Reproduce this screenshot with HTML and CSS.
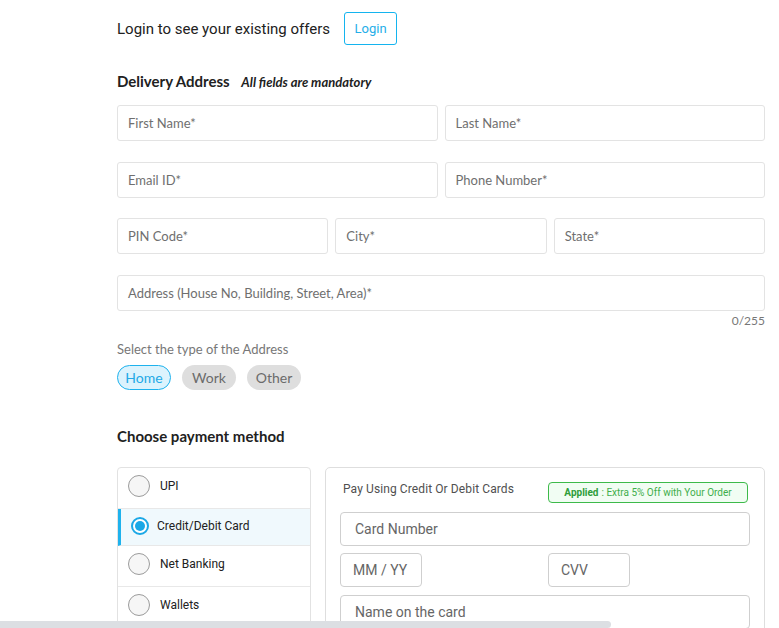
FILE: index.html
```html
<!DOCTYPE html>
<html>
<head>
<meta charset="utf-8">
<link rel="stylesheet" href="styles.css">
</head>
<body>
<div class="page">
  <div class="login-row">
    <span class="login-text">Login to see your existing offers</span>
    <button class="login-btn">Login</button>
  </div>

  <h2 class="section-title">Delivery Address <em class="mandatory">All fields are mandatory</em></h2>

  <div class="form">
    <div class="row two">
      <div class="field">First Name*</div>
      <div class="field">Last Name*</div>
    </div>
    <div class="row two">
      <div class="field">Email ID*</div>
      <div class="field">Phone Number*</div>
    </div>
    <div class="row three">
      <div class="field">PIN Code*</div>
      <div class="field">City*</div>
      <div class="field">State*</div>
    </div>
    <div class="row one">
      <div class="field">Address (House No, Building, Street, Area)*</div>
    </div>
  </div>
  <div class="counter">0/255</div>

  <div class="type-label">Select the type of the Address</div>
  <div class="pills">
    <span class="pill active">Home</span>
    <span class="pill">Work</span>
    <span class="pill">Other</span>
  </div>

  <h3 class="pay-title">Choose payment method</h3>

  <div class="pay">
    <div class="methods">
      <div class="method"><span class="radio"></span><span>UPI</span></div>
      <div class="method selected"><span class="radio on"></span><span>Credit/Debit Card</span></div>
      <div class="method"><span class="radio"></span><span>Net Banking</span></div>
      <div class="method"><span class="radio"></span><span>Wallets</span></div>
    </div>
    <div class="card-panel">
      <div class="card-head">
        <span class="card-title">Pay Using Credit Or Debit Cards</span>
        <span class="applied"><b>Applied</b> : Extra 5% Off with Your Order</span>
      </div>
      <div class="cinput wide">Card Number</div>
      <div class="split">
        <div class="cinput small">MM / YY</div>
        <div class="cinput small">CVV</div>
      </div>
      <div class="cinput wide">Name on the card</div>
    </div>
  </div>
</div>
<div class="hscroll"></div>
</body>
</html>
```

FILE: styles.css
```css
html, body {
  margin: 0;
  padding: 0;
  background: #fff;
  overflow: hidden;
  height: 628px;
}
.page {
  margin-left: 117px;
  width: 648px;
  font-family: Lato, "Noto Sans", sans-serif;
  color: #212121;
}
.login-row {
  display: flex;
  align-items: center;
  padding-top: 12px;
  height: 33px;
}
.login-text {
  font-family: Roboto, sans-serif;
  font-size: 15px;
  color: #212121;
}
.login-btn {
  margin-left: 14px;
  height: 33px;
  width: 53px;
  padding: 0;
  border: 1px solid #14b4ef;
  border-radius: 3px;
  background: #fff;
  color: #25aee8;
  font-family: Roboto, sans-serif;
  font-size: 13px;
}
.section-title {
  margin: 26px 0 0;
  height: 20px;
  line-height: 20px;
  font-size: 15px;
  font-weight: 700;
  color: #212121;
}
.mandatory {
  margin-left: 8px;
  font-size: 13px;
  font-weight: 700;
  font-style: italic;
}
.form {
  margin-top: 14px;
  display: flex;
  flex-direction: column;
}
.row {
  display: grid;
  gap: 7px;
  margin-top: 21px;
}
.row:first-child { margin-top: 0; }
.row.three { margin-top: 20px; }
.row.two { grid-template-columns: 1fr 1fr; }
.row.three { grid-template-columns: 1fr 1fr 1fr; }
.row.one { grid-template-columns: 1fr; }
.field {
  height: 36px;
  box-sizing: border-box;
  border: 1px solid #e3e3e3;
  border-radius: 3px;
  padding: 0 10px;
  display: flex;
  align-items: center;
  font-size: 13px;
  color: #6f6f6f;
}
.counter {
  text-align: right;
  font-size: 12px;
  color: #777;
  line-height: 16px;
  margin-top: 2px;
}
.type-label {
  margin-top: 11px;
  font-size: 13px;
  color: #777;
  line-height: 18px;
}
.pills {
  margin-top: 7px;
  display: flex;
  gap: 11px;
}
.pill {
  box-sizing: border-box;
  height: 25px;
  width: 54px;
  border-radius: 13px;
  background: #dedede;
  color: #6b6b6b;
  font-size: 14px;
  display: flex;
  align-items: center;
  justify-content: center;
}
.pill.active {
  background: #dcf3fd;
  border: 1px solid #1eb2ed;
  color: #23a9e6;
}
.pay-title {
  margin: 36px 0 0;
  font-size: 15px;
  font-weight: 700;
  line-height: 20px;
  color: #212121;
}
.pay {
  margin-top: 21px;
  display: flex;
  gap: 14px;
  align-items: flex-start;
}
.methods {
  width: 194px;
  box-sizing: border-box;
  border: 1px solid #e2e2e2;
  border-radius: 4px;
  height: 200px;
  font-family: Roboto, sans-serif;
  font-size: 12px;
  color: #212121;
}
.method {
  display: flex;
  align-items: center;
  gap: 10px;
  height: 40px;
  box-sizing: content-box;
  padding-left: 10px;
  border-bottom: 1px solid #e8e8e8;
}
.method > * { margin-top: -4px; }
.method.selected {
  height: 36px;
  background: #f0f9fd;
  border-left: 3px solid #1eb2ed;
  padding-left: 10px;
  gap: 8px;
}
.method.selected > * { margin-top: -3px; }
.radio {
  width: 22px;
  height: 22px;
  border-radius: 50%;
  border: 1px solid #9b9b9b;
  background: #f6f6f6;
  box-sizing: border-box;
  flex: none;
}
.radio.on {
  width: 18px;
  height: 18px;
  border: 2px solid #1ba8e6;
  background: #fff;
  display: flex;
  align-items: center;
  justify-content: center;
}
.radio.on::after {
  content: "";
  width: 10px;
  height: 10px;
  border-radius: 50%;
  background: #1ba8e6;
}
.card-panel {
  flex: 1;
  box-sizing: border-box;
  border: 1px solid #dedede;
  border-radius: 5px;
  height: 200px;
  padding: 13px 14px 0;
  font-family: Roboto, sans-serif;
}
.card-head {
  display: flex;
  justify-content: space-between;
  align-items: center;
  height: 22px;
  padding-left: 3px;
  padding-right: 2px;
}
.card-title {
  font-size: 12px;
  color: #505050;
  letter-spacing: 0.1px;
  margin-top: -6px;
}
.applied {
  box-sizing: border-box;
  width: 200px;
  height: 21px;
  border: 1px solid #3dba4a;
  border-radius: 4px;
  background: #f1fdf3;
  color: #3fae4b;
  font-size: 10px;
  display: flex;
  align-items: center;
  justify-content: center;
}
.applied b { font-weight: 700; color: #2e9e3a; margin-right: 3px; }
.cinput {
  box-sizing: border-box;
  height: 34px;
  border: 1px solid #cfcfcf;
  border-radius: 4px;
  display: flex;
  align-items: center;
  padding-left: 14px;
  font-size: 14px;
  color: #666;
}
.cinput.wide { margin-top: 9px; }
.split {
  display: flex;
  gap: 126px;
  margin-top: 7px;
}
.split + .cinput.wide { margin-top: 8px; }
.cinput.small {
  width: 82px;
  padding-left: 12px;
}
.hscroll {
  position: fixed;
  left: 0;
  bottom: 0;
  width: 611px;
  height: 7px;
  background: #dcdfe3;
  border-radius: 0 4px 4px 0;
}
```
